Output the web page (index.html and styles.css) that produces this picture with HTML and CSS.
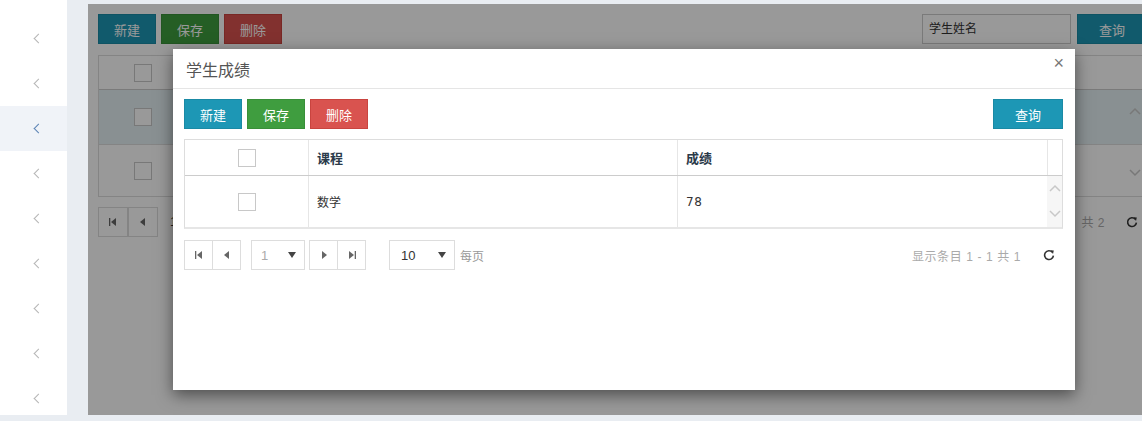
FILE: index.html
```html
<!DOCTYPE html>
<html lang="zh">
<head>
    <meta charset="UTF-8">
    <title>学生成绩</title>
    <link rel="stylesheet" href="styles.css">
</head>
<body>
<div class="layout">
    <!-- menu laterale -->
    <aside class="sidebar">
        <div class="side-item"><span class="chev"></span></div>
        <div class="side-item"><span class="chev"></span></div>
        <div class="side-item active"><span class="chev"></span></div>
        <div class="side-item"><span class="chev"></span></div>
        <div class="side-item"><span class="chev"></span></div>
        <div class="side-item"><span class="chev"></span></div>
        <div class="side-item"><span class="chev"></span></div>
        <div class="side-item"><span class="chev"></span></div>
        <div class="side-item"><span class="chev"></span></div>
    </aside>

    <main class="frame">
        <!-- pagina studenti (sotto il modale) -->
        <div class="page">
            <div class="toolbar">
                <button class="btn btn-info">新建</button>
                <button class="btn btn-success">保存</button>
                <button class="btn btn-danger">删除</button>
                <div class="spacer"></div>
                <input class="search" type="text" placeholder="学生姓名">
                <button class="btn btn-info btn-query">查询</button>
            </div>
            <div class="bg-table">
                <div class="bg-row bg-head"><div class="bg-check"><span class="checkbox"></span></div></div>
                <div class="bg-row bg-sel">
                    <div class="bg-check"><span class="checkbox"></span></div>
                    <svg class="bg-arrow up" width="12" height="8" viewBox="0 0 12 8"><path d="M1 7 L6 2 L11 7" fill="none" stroke="#c8c8c8" stroke-width="1.5"/></svg>
                </div>
                <div class="bg-row bg-second">
                    <div class="bg-check"><span class="checkbox"></span></div>
                    <svg class="bg-arrow down" width="12" height="8" viewBox="0 0 12 8"><path d="M1 1 L6 6 L11 1" fill="none" stroke="#c8c8c8" stroke-width="1.5"/></svg>
                </div>
            </div>
            <div class="bg-pager">
                <span class="pg-btn">
                    <svg width="8" height="8" viewBox="0 0 8 8"><rect x="0" y="0" width="1.3" height="8" fill="#666"/><path d="M7 0 L2 4 L7 8 Z" fill="#666"/></svg>
                </span>
                <span class="pg-btn">
                    <svg width="6" height="8" viewBox="0 0 6 8"><path d="M5 0 L0 4 L5 8 Z" fill="#666"/></svg>
                </span>
                <span class="bg-page">1</span>
                <div class="spacer"></div>
                <span class="bg-total">共 2</span>
                <svg class="refresh" width="12" height="12" viewBox="0 0 12 12"><path d="M9.3 3.2 A4.4 4.4 0 1 0 10.4 6.6" fill="none" stroke="#333" stroke-width="1.6"/><path d="M7.4 1.2 L10.8 1.6 L10 5 Z" fill="#333"/></svg>
            </div>
        </div>

        <div class="backdrop"></div>

        <!-- finestra modale -->
        <div class="modal">
            <div class="modal-header">
                <span class="modal-title">学生成绩</span>
                <span class="close">×</span>
            </div>
            <div class="modal-body">
                <div class="toolbar">
                    <button class="btn btn-info">新建</button>
                    <button class="btn btn-success">保存</button>
                    <button class="btn btn-danger">删除</button>
                    <div class="spacer"></div>
                    <button class="btn btn-info btn-query">查询</button>
                </div>

                <div class="grid">
                    <div class="grid-head">
                        <div class="cell cell-check"><span class="checkbox"></span></div>
                        <div class="cell cell-course">课程</div>
                        <div class="cell cell-score">成绩</div>
                        <div class="cell cell-gutter"></div>
                    </div>
                    <div class="grid-body">
                        <div class="grid-row">
                            <div class="cell cell-check"><span class="checkbox"></span></div>
                            <div class="cell cell-course">数学</div>
                            <div class="cell cell-score">78</div>
                        </div>
                        <div class="vscroll">
                            <svg width="12" height="8" viewBox="0 0 12 8"><path d="M1 7 L6 2 L11 7" fill="none" stroke="#c8c8c8" stroke-width="1.5"/></svg>
                            <svg width="12" height="8" viewBox="0 0 12 8"><path d="M1 1 L6 6 L11 1" fill="none" stroke="#c8c8c8" stroke-width="1.5"/></svg>
                        </div>
                    </div>
                </div>

                <div class="pager">
                    <div class="pg-group">
                        <span class="pg-btn">
                            <svg width="8" height="8" viewBox="0 0 8 8"><rect x="0" y="0" width="1.3" height="8" fill="#666"/><path d="M7 0 L2 4 L7 8 Z" fill="#666"/></svg>
                        </span>
                        <span class="pg-btn">
                            <svg width="6" height="8" viewBox="0 0 6 8"><path d="M5 0 L0 4 L5 8 Z" fill="#666"/></svg>
                        </span>
                    </div>
                    <div class="pg-select pg-page">
                        <span class="pg-value light">1</span>
                        <svg width="8" height="6" viewBox="0 0 8 6"><path d="M0 0 L8 0 L4 6 Z" fill="#444"/></svg>
                    </div>
                    <div class="pg-group">
                        <span class="pg-btn">
                            <svg width="6" height="8" viewBox="0 0 6 8"><path d="M1 0 L6 4 L1 8 Z" fill="#666"/></svg>
                        </span>
                        <span class="pg-btn">
                            <svg width="8" height="8" viewBox="0 0 8 8"><path d="M1 0 L6 4 L1 8 Z" fill="#666"/><rect x="6.7" y="0" width="1.3" height="8" fill="#666"/></svg>
                        </span>
                    </div>
                    <div class="pg-select pg-size">
                        <span class="pg-value">10</span>
                        <svg width="8" height="6" viewBox="0 0 8 6"><path d="M0 0 L8 0 L4 6 Z" fill="#444"/></svg>
                    </div>
                    <span class="pg-label">每页</span>
                    <div class="spacer"></div>
                    <span class="pg-info">显示条目 1 - 1 共 1</span>
                    <svg class="refresh" width="12" height="12" viewBox="0 0 12 12"><path d="M9.3 3.2 A4.4 4.4 0 1 0 10.4 6.6" fill="none" stroke="#333" stroke-width="1.6"/><path d="M7.4 1.2 L10.8 1.6 L10 5 Z" fill="#333"/></svg>
                </div>
            </div>
        </div>
    </main>
</div>
</body>
</html>
```

FILE: styles.css
```css
body {
    margin: 0;
    background-color: #e9edf2;
    font-family: "Liberation Sans", "Noto Sans CJK SC", sans-serif;
    color: #333;
    overflow: hidden;
}
.layout {
    display: flex;
    height: 421px;
}
.spacer {
    flex: 1;
}

/* sidebar */
.sidebar {
    width: 67px;
    height: 399px;
    padding-top: 16px;
    background-color: #ffffff;
    flex-shrink: 0;
}
.side-item {
    height: 45px;
    display: flex;
    align-items: center;
    justify-content: flex-end;
    padding-right: 25px;
}
.side-item.active {
    background-color: #f0f3f8;
}
.chev {
    width: 6px;
    height: 6px;
    border-left: 1.3px solid #b5b5b5;
    border-bottom: 1.3px solid #b5b5b5;
    transform: rotate(45deg);
}
.side-item.active .chev {
    border-color: #5b83b5;
}

/* content frame */
.frame {
    position: relative;
    flex: 1;
    margin: 4px 0 6px 21px;
    background-color: #ffffff;
    overflow: hidden;
}
.page {
    padding: 10px;
}
.toolbar {
    display: flex;
    align-items: center;
    gap: 5px;
}
.btn {
    width: 58px;
    height: 30px;
    border: 1px solid transparent;
    color: #ffffff;
    font-family: "Liberation Sans", "Noto Sans CJK SC", sans-serif;
    font-size: 13px;
    padding: 0;
    cursor: pointer;
}
.btn-info {
    background-color: #1d97b5;
    border-color: #1a8aa5;
}
.btn-success {
    background-color: #3f9d3f;
    border-color: #398f39;
}
.btn-danger {
    background-color: #d9534f;
    border-color: #c9443f;
}
.btn-query {
    width: 70px;
}
.page .btn-query {
    margin-left: 1px;
    margin-right: -15px;
    flex-shrink: 0;
}
.search {
    width: 135px;
    height: 28px;
    border: 1px solid #ccc;
    padding: 0 6px;
    font-family: "Liberation Sans", "Noto Sans CJK SC", sans-serif;
    font-size: 12px;
    color: #333;
}
.search::placeholder {
    color: #333;
}

.bg-table {
    margin-top: 11px;
    margin-right: -10px;
    border: 1px solid #ddd;
    border-right: none;
}
.bg-row {
    display: flex;
    align-items: center;
    height: 55px;
    border-top: 1px solid #ddd;
}
.bg-head {
    height: 33px;
    border-top: none;
    border-bottom: 1px solid #ccc;
}
.bg-sel {
    background-color: #e4f1f3;
    height: 54px;
    border-top: none;
}
.bg-second {
    height: 51px;
}
.bg-check {
    width: 88px;
    display: flex;
    justify-content: center;
}
.bg-arrow {
    margin-left: auto;
    margin-right: 1px;
}
.bg-arrow.up {
    align-self: flex-start;
    margin-top: 17px;
}
.bg-arrow.down {
    margin-top: 4px;
}
.bg-pager {
    display: flex;
    align-items: center;
    height: 29px;
    margin-top: 10px;
    margin-right: -6px;
}
.bg-pager .pg-btn {
    width: 28px;
    border: 1px solid #ddd;
}
.bg-page {
    margin-left: 12px;
    font-size: 13px;
}
.bg-total {
    font-size: 12px;
    color: #aaa;
    letter-spacing: 0.5px;
    margin-right: 21px;
}

/* modal */
.backdrop {
    position: absolute;
    inset: 0;
    background-color: rgba(0, 0, 0, 0.4);
}
.modal {
    position: absolute;
    left: 85px;
    top: 45px;
    width: 902px;
    height: 341px;
    background-color: #ffffff;
    box-shadow: 0 5px 15px rgba(0, 0, 0, 0.5);
}
.modal-header {
    height: 39px;
    border-bottom: 1px solid #e5e5e5;
    display: flex;
    align-items: center;
    justify-content: space-between;
    padding: 0 13px;
}
.modal-title {
    font-size: 16px;
    color: #555;
}
.close {
    font-size: 18px;
    color: #777;
    margin-top: -10px;
    margin-right: -2px;
}
.modal-body {
    padding: 10px 12px 0 11px;
}

.grid {
    margin-top: 10px;
    border: 1px solid #ddd;
    border-bottom-width: 2px;
    border-bottom-color: #e6e6e6;
}
.grid-head {
    display: flex;
    height: 35px;
    border-bottom: 1px solid #ccc;
}
.grid-head .cell {
    font-size: 13px;
    font-weight: bold;
    color: #2b3a4a;
}
.cell {
    display: flex;
    align-items: center;
    padding-left: 8px;
    border-right: 1px solid #e6e6e6;
}
.cell-check {
    width: 123px;
    padding-left: 0;
    justify-content: center;
}
.cell-course {
    width: 360px;
}
.cell-score {
    width: 361px;
}
.cell-gutter {
    flex: 1;
    padding: 0;
    border-right: none;
}
.grid-body {
    display: flex;
    height: 51px;
}
.grid-row {
    display: flex;
}
.grid-row .cell {
    font-size: 12px;
    color: #333;
}
.grid-row .cell-score {
    border-right: none;
    font-family: "DejaVu Sans", sans-serif;
    letter-spacing: 0.5px;
}
.vscroll {
    flex: 1;
    background-color: #f6f6f6;
    display: flex;
    flex-direction: column;
    justify-content: space-between;
    align-items: center;
    padding: 8px 0 9px;
}
.checkbox {
    width: 16px;
    height: 16px;
    border: 1px solid #c8c8c8;
    background-color: #ffffff;
}

/* paginazione */
.pager {
    display: flex;
    align-items: center;
    height: 30px;
    margin-top: 11px;
}
.pg-group {
    display: flex;
    border: 1px solid #ddd;
}
.pg-btn {
    width: 27px;
    height: 28px;
    display: flex;
    align-items: center;
    justify-content: center;
    background-color: #ffffff;
}
.pg-group .pg-btn + .pg-btn {
    border-left: 1px solid #ddd;
}
.pg-select {
    height: 28px;
    border: 1px solid #ddd;
    display: flex;
    align-items: center;
    justify-content: space-between;
    padding: 0 8px 0 9px;
    box-sizing: border-box;
}
.pg-page {
    width: 54px;
    height: 30px;
    margin: 0 4px 0 10px;
}
.pg-size {
    width: 66px;
    height: 30px;
    margin-left: 23px;
    padding-left: 11px;
}
.pg-value {
    font-size: 13px;
    color: #333;
}
.pg-value.light {
    color: #aaa;
}
.pg-label {
    font-size: 12px;
    color: #999;
    margin-left: 5px;
}
.pg-info {
    font-size: 12px;
    color: #aaa;
    letter-spacing: 0.6px;
    margin-right: 22px;
}
.pager .refresh {
    margin-right: 8px;
}
```
